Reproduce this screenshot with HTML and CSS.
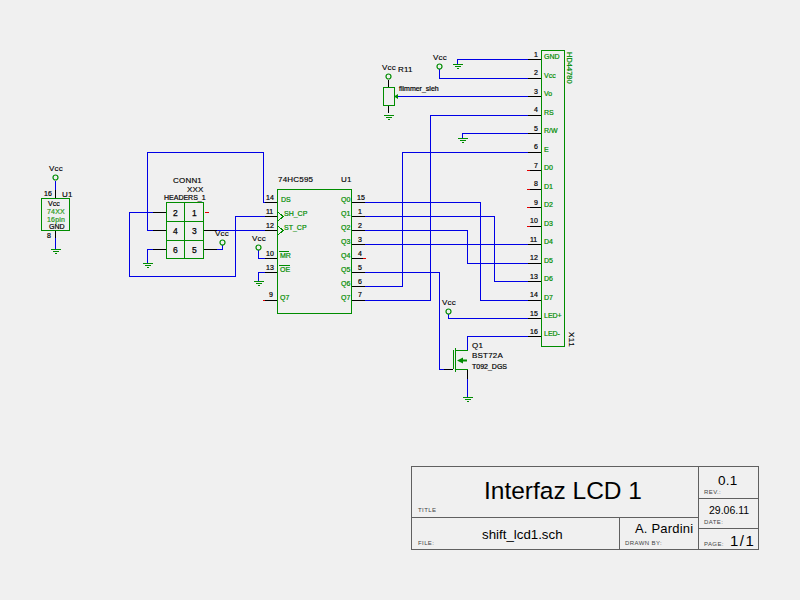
FILE: index.html
```html
<!DOCTYPE html>
<html lang="es">
<head>
<meta charset="utf-8">
<title>shift_lcd1.sch</title>
<link rel="stylesheet" href="styles.css">
</head>
<body>
<svg class="sheet" width="800" height="600" viewBox="0 0 800 600">
<defs>
<g id="gnd" class="part"><path d="M-5 0.5H5M-3 2.5H3M-1 4.5H1"/></g>
<g id="vcc"><circle class="part" cx="0" cy="0" r="2.5"/></g>
</defs>

<!-- wires -->
<g class="wire">
<path d="M55.5 181V190M55.5 238V249"/>
<path d="M153 212.5H129.5V276.5H235.5V216.5H265"/>
<path d="M153 230.5H147.5V152.5H263.5V202.5H265"/>
<path d="M153 249.5H147.5V263"/>
<path d="M217 230.5H265"/>
<path d="M217 249.5H222.5V245"/>
<path d="M258.5 250V258.5H265"/>
<path d="M265 272.5H258.5V281"/>
<path d="M365 202.5H480.5V300.5H528"/>
<path d="M365 216.5H494.5V281.5H528"/>
<path d="M365 230.5H467.5V263.5H528"/>
<path d="M365 244.5H528"/>
<path d="M365 272.5H439.5V369.5H444"/>
<path d="M365 286.5H402.5V152.5H528"/>
<path d="M365 300.5H430.5V115.5H528"/>
<path d="M457.5 64V59.5H528"/>
<path d="M439.5 69V78.5H528"/>
<path d="M396 96.5H528"/>
<path d="M462.5 138V133.5H528"/>
<path d="M448.5 314V318.5H528"/>
<path d="M528 336.5H467.5V350"/>
<path d="M467.5 379V397"/>
</g>

<!-- pins -->
<g class="pin">
<path d="M55.5 190V199M55.5 231V238"/>
<path d="M153 212.5H166M153 230.5H166M153 249.5H166M204 230.5H217M204 249.5H217"/>
<path d="M265 202.5H277M265 216.5H277M265 230.5H277M265 258.5H277M265 272.5H277M265 300.5H277"/>
<path d="M351 202.5H365M351 216.5H365M351 230.5H365M351 244.5H365M351 258.5H363M351 272.5H365M351 286.5H365M351 300.5H365"/>
<path d="M528 59.5H541M528 78.5H541M528 96.5H541M528 115.5H541M528 133.5H541M528 152.5H541M530 170.5H541M530 189.5H541M530 207.5H541M530 226.5H541M528 244.5H541M528 263.5H541M528 281.5H541M528 300.5H541M528 318.5H541M528 336.5H541"/>
<path d="M388.5 80V87M388.5 105V113"/>
<path d="M444 369.5H453M467.5 369V379"/>
</g>
<g class="nc">
<path d="M205 212.5H209M263 300.5H265M363 258.5H366M527 170.5H530M527 189.5H530M527 207.5H530M527 226.5H530"/>
</g>

<!-- parts -->
<g class="part">
<rect x="41.5" y="198.5" width="28" height="32"/>
<rect x="166.5" y="202.5" width="37" height="56"/>
<path d="M184.5 202V258M166 221.5H203M166 240.5H203"/>
<rect x="277.5" y="189.5" width="74" height="124"/>
<path d="M277.5 211.5L283 216.5L277.5 221.5M277.5 225.5L283 230.5L277.5 235.5"/>
<path d="M279 251.5H289M279 265.5H290"/>
<rect x="541.5" y="50.5" width="23" height="296"/>
<rect x="383.5" y="87.5" width="11" height="18"/>
<path d="M453.5 350V369M455.5 348V372M455.5 350.5H467.5M455.5 369.5H467.5"/>
</g>
<path class="fillgreen" d="M457 360.5L463 357.5V359.5H467V361.5H463V363.5ZM394 96.5L398 94V99Z"/>

<use href="#gnd" x="55.5" y="248.5"/>
<use href="#gnd" x="147.5" y="262.5"/>
<use href="#gnd" x="258.5" y="280.5"/>
<use href="#gnd" x="457.5" y="63.5"/>
<use href="#gnd" x="462.5" y="138"/>
<use href="#gnd" x="388.5" y="115"/>
<use href="#gnd" x="467.5" y="397"/>
<use href="#vcc" x="55.5" y="177.5"/>
<use href="#vcc" x="222.5" y="242.5"/>
<use href="#vcc" x="258.5" y="247.5"/>
<use href="#vcc" x="388.5" y="76.5"/>
<use href="#vcc" x="439.5" y="66.5"/>
<use href="#vcc" x="448.5" y="311.5"/>

<!-- labels -->
<g class="lbl">
<text x="49" y="171">Vcc</text>
<text x="215" y="236">Vcc</text>
<text x="252" y="241">Vcc</text>
<text x="382" y="70">Vcc</text>
<text x="433" y="60">Vcc</text>
<text x="442" y="305">Vcc</text>
<text x="398" y="72">R11</text>
<text x="62" y="197">U1</text>
<text x="173" y="183">CONN1</text>
<text x="187" y="192">XXX</text>
<text x="278" y="182">74HC595</text>
<text x="341" y="182">U1</text>
<text x="472" y="348">Q1</text>
<text x="472" y="358">BST72A</text>
</g>
<g class="sm">
<text x="44" y="196">16</text>
<text x="47" y="238">8</text>
<text x="48" y="205.5">Vcc</text>
<text x="49" y="229">GND</text>
<text x="164" y="200">HEADERS_1</text>
<text x="399" y="91">flimmer_sleh</text>
<text x="472" y="369">T092_DGS</text>
<text x="266" y="200">14</text><text x="266" y="214">11</text><text x="266" y="228">12</text><text x="266" y="256">10</text><text x="266" y="270">13</text><text x="269" y="297">9</text>
<text x="357" y="200">15</text><text x="358" y="214">1</text><text x="358" y="228">2</text><text x="358" y="242">3</text><text x="358" y="256">4</text><text x="358" y="270">5</text><text x="358" y="284">6</text><text x="358" y="297">7</text>
<text x="534" y="57">1</text><text x="534" y="75">2</text><text x="534" y="94">3</text><text x="534" y="112">4</text><text x="534" y="131">5</text><text x="534" y="149">6</text><text x="534" y="168">7</text><text x="534" y="186">8</text><text x="534" y="205">9</text><text x="530" y="223">10</text><text x="530" y="242">11</text><text x="530" y="260">12</text><text x="530" y="279">13</text><text x="530" y="297">14</text><text x="530" y="316">15</text><text x="530" y="334">16</text>
</g>
<g class="nums">
<text x="173" y="216">2</text><text x="192" y="216">1</text><text x="173" y="234">4</text><text x="192" y="234">3</text><text x="173" y="253">6</text><text x="192" y="253">5</text>
</g>
<g class="gtx">
<text class="lite" x="47" y="214">74XX</text>
<text class="lite" x="47" y="221.5">16pin</text>
<text x="281" y="202">DS</text><text x="284" y="216">SH_CP</text><text x="284" y="230">ST_CP</text><text x="280" y="258">MR</text><text x="280" y="272">OE</text><text x="280" y="300">Q7</text>
<text x="341" y="202">Q0</text><text x="341" y="216">Q1</text><text x="341" y="230">Q2</text><text x="341" y="244">Q3</text><text x="341" y="258">Q4</text><text x="341" y="272">Q5</text><text x="341" y="286">Q6</text><text x="341" y="300">Q7</text>
<text x="544" y="59">GND</text><text x="544" y="78">Vcc</text><text x="544" y="96">Vo</text><text x="544" y="115">RS</text><text x="544" y="133">R/W</text><text x="544" y="152">E</text><text x="544" y="170">D0</text><text x="544" y="189">D1</text><text x="544" y="207">D2</text><text x="544" y="226">D3</text><text x="544" y="244">D4</text><text x="544" y="263">D5</text><text x="544" y="281">D6</text><text x="544" y="300">D7</text><text x="544" y="318">LED+</text><text x="544" y="336">LED-</text>
<text class="side" transform="translate(567 52) rotate(90)">HD44780</text>
</g>
<text class="sidek" transform="translate(569 332) rotate(90)">X11</text>

<!-- title block -->
<g class="frame">
<rect x="411.5" y="466.5" width="347" height="83"/>
<path d="M698.5 466V549M411 517.5H698M619.5 518V549M699 498.5H758M699 528.5H758"/>
</g>
<g class="tiny">
<text x="418" y="512">TITLE</text>
<text x="418" y="545">FILE:</text>
<text x="625" y="545">DRAWN BY:</text>
<text x="704" y="494">REV.:</text>
<text x="704" y="524">DATE:</text>
<text x="704" y="546">PAGE:</text>
</g>
<text class="ttl" x="484" y="499">Interfaz LCD 1</text>
<text class="mid" x="482" y="539">shift_lcd1.sch</text>
<text class="who" x="635" y="533">A. Pardini</text>
<text class="rev" x="718" y="485">0.1</text>
<text class="date" x="709" y="514">29.06.11</text>
<text class="pg" x="730" y="546">1/1</text>
</svg>
</body>
</html>
```
FILE: styles.css
```css
html, body {
  margin: 0;
  padding: 0;
  background: #f0f0f0;
}
.sheet {
  display: block;
  font-family: "Liberation Sans", Arial, sans-serif;
}
.wire path, .pin path, .nc path, .part, .frame rect, .frame path {
  fill: none;
  shape-rendering: crispEdges;
}
.wire path { stroke: #0000e6; stroke-width: 1; }
.pin path { stroke: #000; stroke-width: 1; }
.nc path { stroke: #e00000; stroke-width: 1; }
.part { stroke: #008c00; stroke-width: 1; }
circle.part { shape-rendering: auto; stroke-width: 1.2; }
.fillgreen { fill: #008c00; }
.frame rect, .frame path { stroke: #606060; stroke-width: 1; }
.lbl text { font-size: 8px; fill: #000; stroke: #000; stroke-width: 0.15px; letter-spacing: 0.2px; }
.sm text { font-size: 7px; fill: #000; stroke: #000; stroke-width: 0.2px; }
.nums text { font-size: 8.5px; fill: #000; stroke: #000; stroke-width: 0.25px; }
.gtx text { font-size: 7px; fill: #008c00; stroke: #008c00; stroke-width: 0.2px; }
.gtx text.lite { fill: #2a9a1a; stroke: #2a9a1a; letter-spacing: 0.2px; }
.gtx text.side { font-size: 7.5px; }
.sidek { font-size: 8px; fill: #000; stroke: #000; stroke-width: 0.15px; letter-spacing: 0.5px; }
.tiny text { font-size: 6px; fill: #444; letter-spacing: 0.4px; }
.ttl { font-size: 24.5px; fill: #000; }
.mid { font-size: 13.3px; fill: #000; }
.who { font-size: 13px; letter-spacing: 0.2px; fill: #000; }
.rev { font-size: 13.5px; letter-spacing: 0.3px; fill: #000; }
.date { font-size: 10.5px; fill: #000; }
.pg { font-size: 15px; letter-spacing: 1.5px; fill: #000; }
```
